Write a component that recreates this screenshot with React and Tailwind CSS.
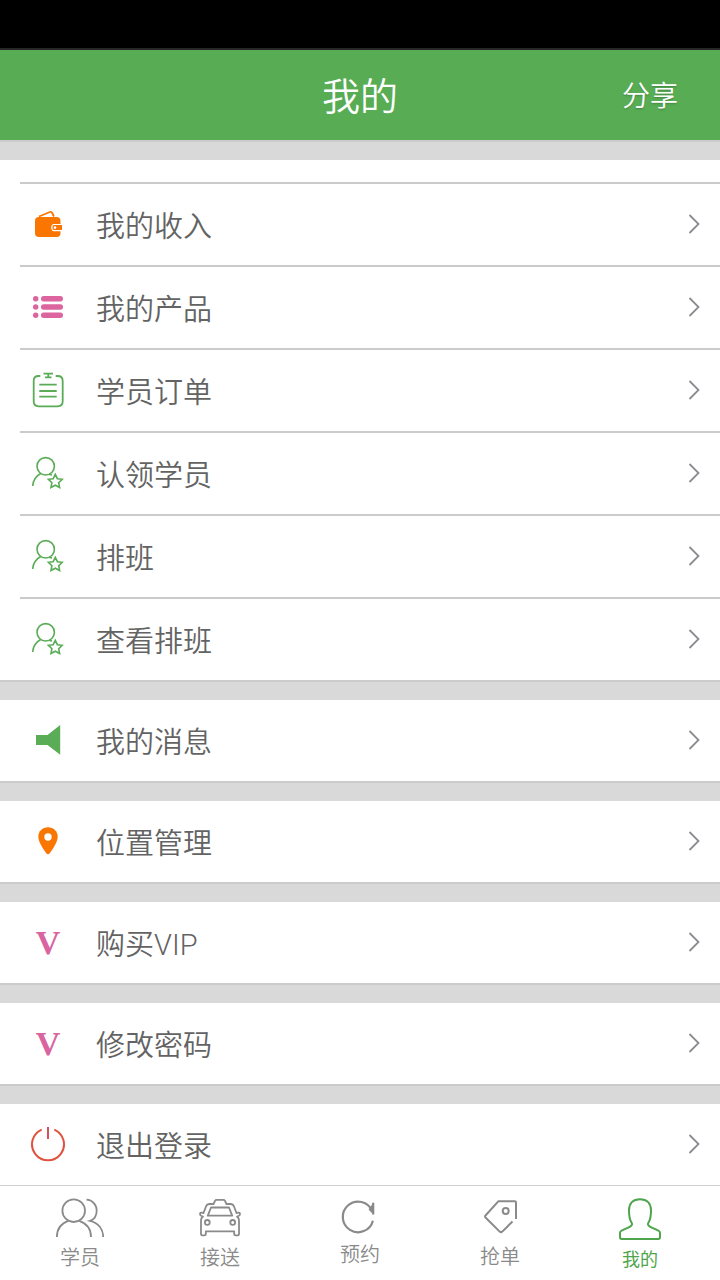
import React from 'react'

function WalletIcon() {
  return (
    <svg width="36" height="37" viewBox="0 0 36 37" fill="none">
      <path d="M9 10.500 L20 6 Q21.500 5.600 22.200 7 L24 10.500" stroke="#f97600" strokeWidth="1.8" />
      <rect x="5" y="11" width="25.500" height="20" rx="4" fill="#f97600" />
      <path d="M32 18.500 H24 Q21.800 18.500 21.800 21.500 Q21.800 24.600 24 24.600 H32" fill="#f97600" stroke="#fff" strokeWidth="1.2" />
      <path d="M30.600 19 V24" stroke="#f97600" strokeWidth="1.4" />
      <circle cx="25" cy="21.600" r="1.300" fill="#fff" />
    </svg>
  )
}

function ListIcon() {
  return (
    <svg width="36" height="37" viewBox="0 0 36 37" fill="#dc649f">
      <circle cx="5.700" cy="9.700" r="2.700" />
      <circle cx="5.700" cy="18" r="2.700" />
      <circle cx="5.700" cy="26.300" r="2.700" />
      <rect x="11" y="7" width="22" height="5.400" rx="2.700" />
      <rect x="11" y="15.300" width="22" height="5.400" rx="2.700" />
      <rect x="11" y="23.600" width="22" height="5.400" rx="2.700" />
    </svg>
  )
}

function OrderIcon() {
  return (
    <svg width="36" height="37" viewBox="0 0 36 37" fill="none" stroke="#5aac56" strokeWidth="1.8">
      <path d="M10.300 4 H8.500 Q3.700 4 3.700 9 V29.300 Q3.700 34.300 8.700 34.300 H27.700 Q32.700 34.300 32.700 29.300 V9 Q32.700 4 27.700 4 H25.700" />
      <path d="M13.500 1.700 H23 M18.300 1.700 V5.300 M15 5.300 H21.500" />
      <path d="M9.300 12.700 H26.700 M9.300 19 H26.700 M9.300 24.700 H26.700" />
    </svg>
  )
}

function PersonStarIcon() {
  return (
    <svg width="36" height="37" viewBox="0 0 36 37" fill="none" stroke="#5aac56" strokeWidth="1.6">
      <circle cx="15.700" cy="11.300" r="8.700" />
      <path d="M2.700 31 Q3.300 22.500 10.700 18.500 M19 19.300 L22 20" />
      <path d="M25.300 19.300 L27.400 23.700 L32.200 24.300 L28.700 27.700 L29.600 32.500 L25.300 30.200 L21 32.500 L21.900 27.700 L18.400 24.300 L23.200 23.700 Z" />
    </svg>
  )
}

function SpeakerIcon() {
  return (
    <svg width="36" height="37" viewBox="0 0 36 37" fill="#5aac56">
      <path d="M6 13 H17.500 L30.200 3 V32.700 L17.500 23 H6 Z" />
    </svg>
  )
}

function PinIcon() {
  return (
    <svg width="36" height="37" viewBox="0 0 36 37">
      <path d="M18 4.300 C12.500 4.300 8.300 8.400 8.300 13.700 C8.300 18.500 12.500 25 16.300 30.300 Q18 32.300 19.700 30.300 C23.500 25 27.700 18.500 27.700 13.700 C27.700 8.400 23.500 4.300 18 4.300 Z" fill="#f97600" />
      <circle cx="18" cy="14" r="3.700" fill="#fff" />
    </svg>
  )
}

function VIcon() {
  return (
    <span className="w-9 text-center font-['Liberation_Serif',serif] text-[34px] leading-8 font-bold text-[#d9649f]">V</span>
  )
}

function PowerIcon() {
  return (
    <svg width="36" height="37" viewBox="0 0 36 37" fill="none" strokeWidth="2">
      <path d="M11.700 3.600 A16 16 0 1 0 24.300 3.600" stroke="#e0523f" />
      <path d="M18 1 V13" stroke="#d4505c" />
    </svg>
  )
}

function Chevron() {
  return (
    <svg className="ml-auto" width="12" height="21" viewBox="0 0 12 21" fill="none" stroke="#8c8c90" strokeWidth="1.8">
      <path d="M1.500 1 L10.500 10 L1.500 19" />
    </svg>
  )
}

const mainItems = [
  { label: '我的收入', Icon: WalletIcon },
  { label: '我的产品', Icon: ListIcon },
  { label: '学员订单', Icon: OrderIcon },
  { label: '认领学员', Icon: PersonStarIcon },
  { label: '排班', Icon: PersonStarIcon },
  { label: '查看排班', Icon: PersonStarIcon },
]

const otherItems = [
  { label: '我的消息', Icon: SpeakerIcon },
  { label: '位置管理', Icon: PinIcon },
  { label: '购买VIP', Icon: VIcon },
  { label: '修改密码', Icon: VIcon },
  { label: '退出登录', Icon: PowerIcon },
]

function Row({ label, Icon }) {
  return (
    <button type="button" className="flex h-[81px] w-full items-center pr-5 pl-[10px] text-left">
      <Icon />
      <span className="ml-[30px] pt-1 text-[29px] leading-10 text-[#636363]">{label}</span>
      <Chevron />
    </button>
  )
}

function Gap() {
  return <div className="h-5 border-t-2 border-[#cbcbcb] bg-[#d9d9d9]" />
}

function TabBar() {
  return (
    <nav className="grid h-[95px] grid-cols-5 border-t border-[#cfcfcf] bg-white px-[10px] pt-3 text-xl leading-5 text-[#8a8a8a]">
      <a href="#students" className="flex flex-col items-center gap-[9px]">
        <svg width="48" height="41" viewBox="0 0 48 41" fill="none" stroke="currentColor" strokeWidth="1.8">
          <circle cx="17.700" cy="12.700" r="11.300" />
          <path d="M0.900 39 C0.900 31.500 5 25.500 12.300 22.900 M23.300 22.900 C30.500 25.500 35 31.500 35 39" />
          <path d="M30.500 1.700 C36.500 2 40.700 6.700 40.700 12.500 C40.700 17.500 38 21.500 34 22.800 C42 24.500 47.200 31 47.200 39" />
        </svg>
        <span>学员</span>
      </a>

      <a href="#pickup" className="flex flex-col items-center gap-[9px]">
        <svg width="48" height="41" viewBox="0 0 48 41" fill="none" stroke="currentColor" strokeWidth="1.8" strokeLinejoin="round">
          <path d="M13.500 6 H17.500 L19 2.800 Q19.500 1.800 20.700 1.800 H27.300 Q28.500 1.800 29 2.800 L30.500 6 H34.500 Q37 6 38 8.500 L40.500 15 L42.500 14.600 Q44 14.500 44 16 Q44 17.600 42.500 18 L41 18.500 Q43 20 43 22.500 V36 Q43 37.300 41.700 37.300 H39.500 Q38.200 37.300 38.200 36 V33.400 H9.800 V36 Q9.800 37.300 8.500 37.300 H6.300 Q5 37.300 5 36 V22.500 Q5 20 7 18.500 L5.500 18 Q4 17.600 4 16 Q4 14.500 5.500 14.600 L7.500 15 L10 8.500 Q11 6 13.500 6 Z" />
          <path d="M15 9.500 H33 L36.200 17.700 H11.800 Z" />
          <circle cx="11.300" cy="24.400" r="2.400" />
          <circle cx="36.700" cy="24.400" r="2.400" />
        </svg>
        <span>接送</span>
      </a>

      <a href="#booking" className="flex flex-col items-center gap-[9px]">
        <svg width="48" height="38" viewBox="0 0 48 38" fill="none" stroke="currentColor" strokeWidth="2.2">
          <path d="M36.900 22.700 A15.300 15.300 0 1 1 36.200 13" />
          <path d="M37.300 4.700 V16.500 L32.500 11.500 Z" fill="currentColor" stroke="none" />
          <path d="M37.200 4.700 V16.500" />
        </svg>
        <span>预约</span>
      </a>

      <a href="#orders" className="flex flex-col items-center gap-[9px]">
        <svg width="48" height="40" viewBox="0 0 48 40" fill="none" stroke="currentColor" strokeWidth="2" strokeLinejoin="round">
          <path d="M36.500 23.500 L26.300 33.600 Q25 34.800 23.700 33.600 L9.500 19.500 Q8.600 18.500 9.500 17.500 L22.500 3.200 H38.800 Q40 3.200 40 4.400 V21" />
          <circle cx="29.700" cy="13" r="3" />
        </svg>
        <span>抢单</span>
      </a>

      <a href="#mine" aria-current="page" className="flex flex-col items-center gap-[9px] text-lg leading-5 font-normal text-[#4fa54b]">
        <svg width="48" height="43" viewBox="0 0 48 43" fill="none" stroke="currentColor" strokeWidth="2" strokeLinejoin="round">
          <path d="M24 1.300 C17 1.300 13 5.500 13 12.500 C13 18 13.500 21.500 15.500 24.500 Q17 26.800 14.500 28.300 C11 30.300 7.500 31.500 5 33 Q4 33.700 4 35 V39.300 Q4 41 5.700 41 H42.300 Q44 41 44 39.300 V35 Q44 33.700 43 33 C40.500 31.500 37 30.300 33.500 28.300 Q31 26.800 32.500 24.500 C34.500 21.500 35 18 35 12.500 C35 5.500 31 1.300 24 1.300 Z" />
        </svg>
        <span>我的</span>
      </a>
    </nav>
  )
}

export default function App() {
  return (
    <div className="min-h-screen bg-white font-[Roboto,'Noto_Sans_CJK_SC',sans-serif] font-[350]">
      {/* Status bar */}
      <div className="h-[50px] border-b-2 border-[#262626] bg-black" />

      {/* Header */}
      <header className="grid h-[90px] grid-cols-3 items-center bg-[#58ac54] text-white">
        <h1 className="col-start-2 pt-1 text-center text-[38px] leading-[56px]">我的</h1>
        <button type="button" className="justify-self-end pt-1 pr-[42px] text-[28px] leading-10 text-shadow-sm">分享</button>
      </header>
      <Gap />

      {/* Menu */}
      <main>
        <div className="pt-[22px] pl-5">
          {mainItems.map((item) => (
            <div key={item.label} className="border-t-2 border-[#cbcbcb]">
              <Row {...item} />
            </div>
          ))}
        </div>

        {otherItems.map((item) => (
          <div key={item.label}>
            <Gap />
            <div className="pl-5">
              <Row {...item} />
            </div>
          </div>
        ))}
      </main>

      <TabBar />
    </div>
  )
}
